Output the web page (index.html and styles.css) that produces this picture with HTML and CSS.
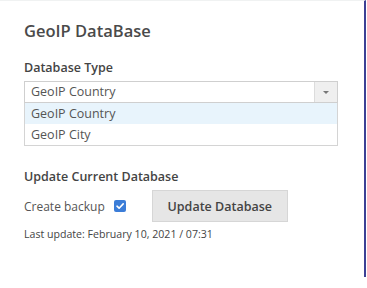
FILE: index.html
```html
<!DOCTYPE html>
<html lang="en">
<head>
    <meta charset="UTF-8">
    <meta name="viewport" content="width=device-width, initial-scale=1.0">
    <title>GeoIP DataBase</title>
    <link rel="stylesheet" href="styles.css">
</head>
<body>
    <div class="panel">
        <h1>GeoIP DataBase</h1>

        <div class="field-label">Database Type</div>
        <div class="select">
            <div class="select-value">GeoIP Country</div>
            <div class="select-arrow"><span class="caret"></span></div>
        </div>
        <ul class="options">
            <li class="active">GeoIP Country</li>
            <li>GeoIP City</li>
        </ul>

        <div class="field-label section">Update Current Database</div>
        <div class="update-row">
            <label class="backup">
                Create backup
                <span class="check">
                    <svg width="12" height="12" viewBox="0 0 12 12">
                        <path d="M3 6.2 L5.1 8.2 L9.2 3.9" fill="none" stroke="#fff" stroke-width="1.6" stroke-linecap="round" stroke-linejoin="round"/>
                    </svg>
                </span>
            </label>
            <button type="button" class="update-btn">Update Database</button>
        </div>
        <div class="last-update">Last update: February 10, 2021 / 07:31</div>
    </div>
</body>
</html>
```

FILE: styles.css
```css
body {
    margin: 0;
    padding: 0;
    background-color: #fff;
    font-family: "Open Sans", Arial, sans-serif;
    color: #444;
}

.panel {
    width: 366px;
    height: 277px;
    padding: 20px 0 0 24px;
    box-sizing: border-box;
    border-right: 2px solid #3c4095;
    border-top: 1px solid #f0f2f2;
}

h1 {
    margin: 0 0 19px;
    font-size: 16.5px;
    line-height: 20px;
    font-weight: 600;
    color: #4a4a4a;
}

.field-label {
    font-size: 12.5px;
    line-height: 16px;
    font-weight: 600;
    color: #444;
    margin-bottom: 5px;
}

.field-label.section {
    margin-top: 23px;
}

.select {
    width: 314px;
    height: 22px;
    box-sizing: border-box;
    border: 1px solid #cfcfcf;
    display: flex;
}

.select-value {
    flex: 1;
    padding-left: 6px;
    font-size: 12.5px;
    line-height: 20px;
    color: #555;
}

.select-arrow {
    width: 22px;
    border-left: 1px solid #dcdcdc;
    background-color: #efefef;
    display: flex;
    justify-content: center;
    align-items: center;
}

.caret {
    width: 0;
    height: 0;
    border-left: 3px solid transparent;
    border-right: 3px solid transparent;
    border-top: 3px solid #777;
}

.options {
    list-style: none;
    margin: 0;
    padding: 0;
    width: 314px;
    box-sizing: border-box;
    border: 1px solid #d4d4d4;
    border-top: none;
}

.options li {
    height: 21px;
    line-height: 21px;
    padding-left: 6px;
    font-size: 12.5px;
    color: #555;
}

.options li.active {
    background-color: #e8f4fc;
}

.update-row {
    display: flex;
    align-items: center;
}

.backup {
    display: flex;
    align-items: center;
    font-size: 12px;
    color: #555;
}

.check {
    width: 12px;
    height: 12px;
    margin-left: 9px;
    border-radius: 2px;
    background-color: #3b7dd8;
    display: flex;
}

.update-btn {
    margin-left: 26px;
    width: 136px;
    height: 32px;
    border: 1px solid #d6d6d6;
    background-color: #e6e6e6;
    font-family: "Open Sans", Arial, sans-serif;
    font-size: 12.5px;
    font-weight: 600;
    color: #444;
    padding: 0;
    cursor: pointer;
}

.last-update {
    margin-top: 5px;
    font-size: 10.6px;
    line-height: 14px;
    color: #444;
}
```
